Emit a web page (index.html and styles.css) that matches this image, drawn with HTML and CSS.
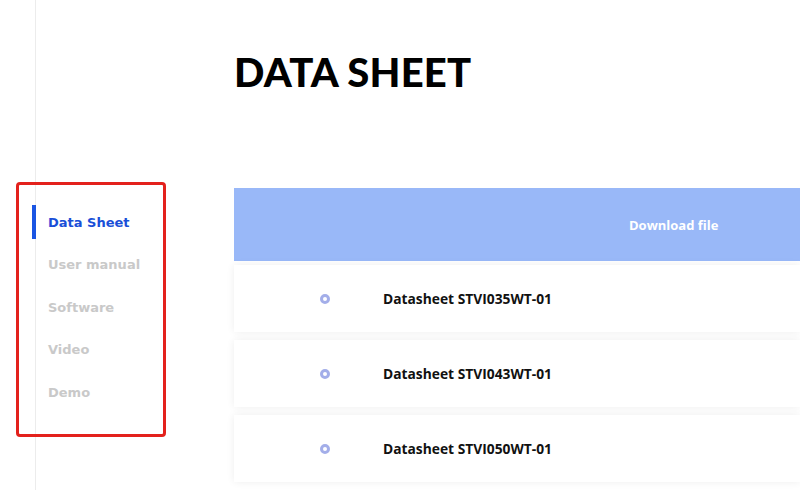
FILE: index.html
```html
<!DOCTYPE html>
<html lang="en">
<head>
<meta charset="utf-8">
<title>Data Sheet</title>
<link rel="stylesheet" href="styles.css">
</head>
<body>
<div class="page">
  <aside class="sidebar">
    <nav class="nav">
      <a class="nav-item active" href="#">Data Sheet</a>
      <a class="nav-item" href="#">User manual</a>
      <a class="nav-item" href="#">Software</a>
      <a class="nav-item" href="#">Video</a>
      <a class="nav-item" href="#">Demo</a>
    </nav>
  </aside>
  <main class="main">
    <h1 class="title">DATA SHEET</h1>
    <div class="table">
      <div class="thead"><span class="th">Download file</span></div>
      <div class="row"><span class="dot"></span><span class="name">Datasheet STVI035WT-01</span></div>
      <div class="row"><span class="dot"></span><span class="name">Datasheet STVI043WT-01</span></div>
      <div class="row"><span class="dot"></span><span class="name">Datasheet STVI050WT-01</span></div>
    </div>
  </main>
</div>
</body>
</html>
```
FILE: styles.css
```css
html, body {
  margin: 0;
  padding: 0;
  background: #ffffff;
  overflow: hidden;
}
body {
  width: 800px;
  height: 493px;
  font-family: "Open Sans", "Liberation Sans", sans-serif;
}
.page {
  display: flex;
  height: 493px;
}
.sidebar {
  width: 234px;
  flex: none;
  padding: 182px 0 0 16px;
  box-sizing: border-box;
  background: linear-gradient(#ececec, #ececec) 35px 0 / 1px 490px no-repeat;
}
.nav {
  width: 150px;
  height: 255px;
  box-sizing: border-box;
  border: 3px solid #e3211c;
  border-radius: 4px;
  padding: 20px 0 0 13px;
  display: flex;
  flex-direction: column;
  gap: 8.5px;
}
.nav-item {
  display: flex;
  align-items: center;
  height: 34px;
  padding-left: 12px;
  border-left: 4px solid transparent;
  font-family: "DejaVu Sans", "Lato", sans-serif;
  font-weight: 700;
  font-size: 13px;
  color: #c9c9c9;
  text-decoration: none;
}
.nav-item.active {
  border-left-color: #1a55e3;
  color: #1a4fd8;
}
.main {
  flex: 1;
  min-width: 0;
  padding-top: 52px;
}
.title {
  margin: 0 0 96px;
  font-family: "Lato", sans-serif;
  font-weight: 900;
  font-size: 40px;
  line-height: 1;
  letter-spacing: 0.2px;
  color: #000;
}
.table {
  display: flex;
  flex-direction: column;
  gap: 8px;
}
.thead {
  height: 73px;
  background: #99b8f8;
  display: flex;
  align-items: center;
  padding-left: 395px;
  margin-bottom: -4px;
}
.th {
  color: #ffffff;
  font-weight: 700;
  font-size: 13px;
}
.row {
  height: 67px;
  background: #fff;
  box-shadow: 0 0 8px rgba(0, 0, 0, 0.07);
  display: flex;
  align-items: center;
  padding-left: 86px;
}
.dot {
  width: 10px;
  height: 10px;
  box-sizing: border-box;
  border: 3px solid #a3aee9;
  border-radius: 50%;
  flex: none;
}
.name {
  margin-left: 53px;
  font-weight: 700;
  font-size: 13.8px;
  color: #111;
}
```
